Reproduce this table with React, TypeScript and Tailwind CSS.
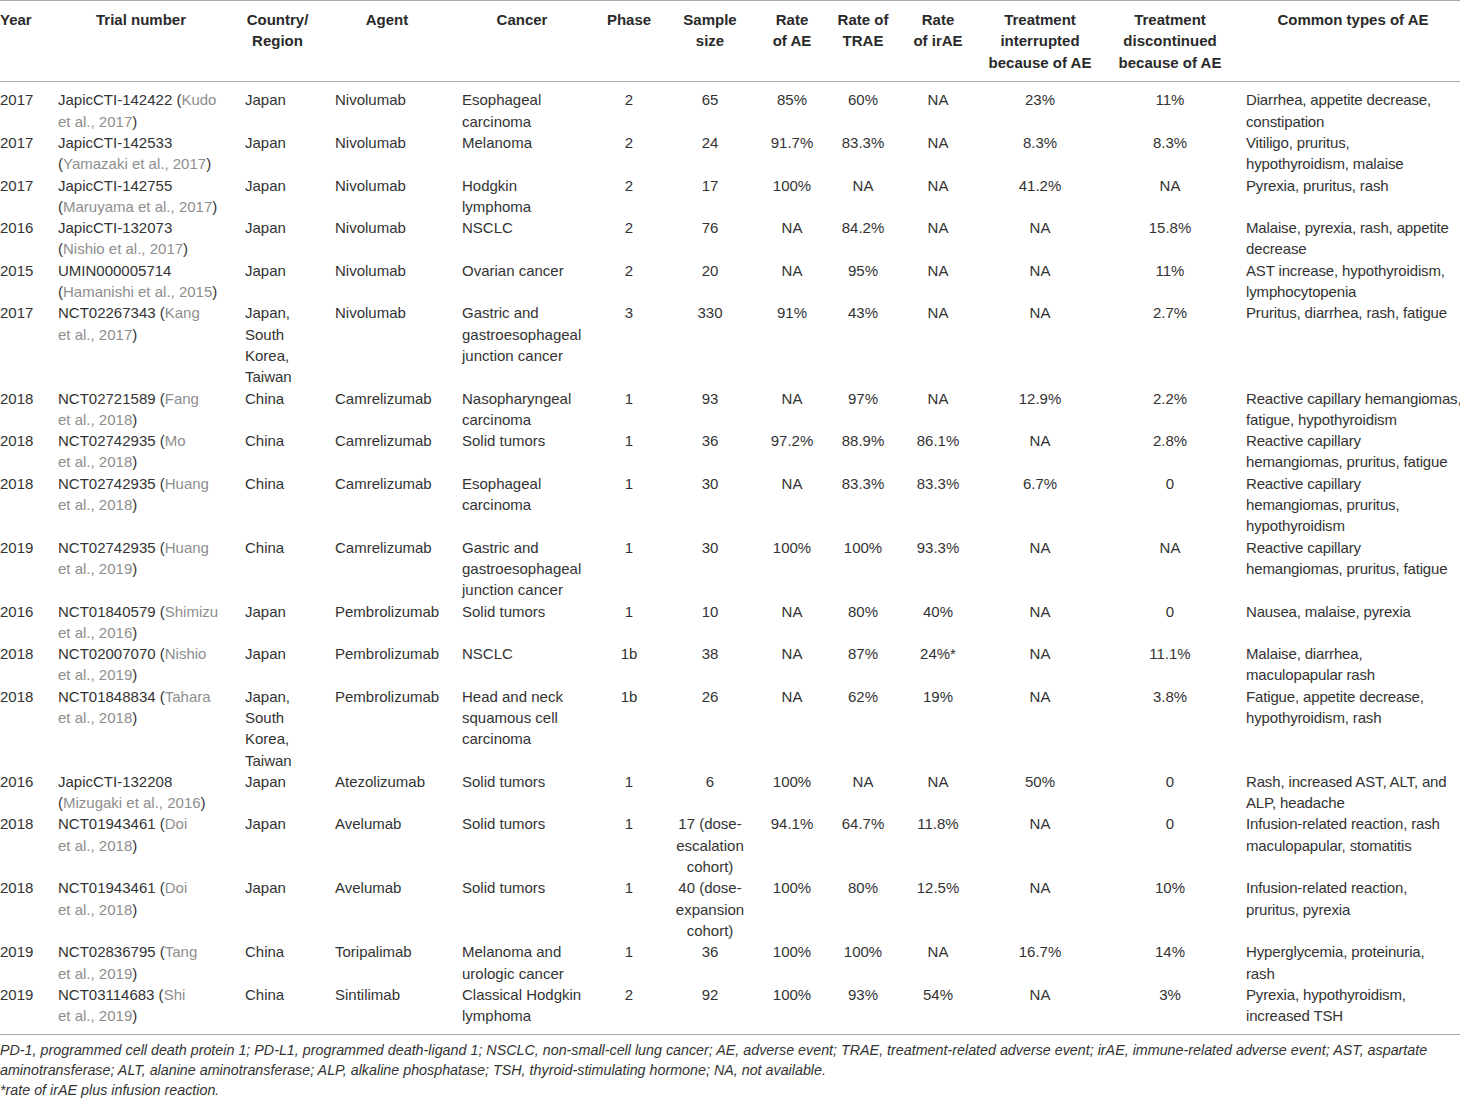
import React from "react";

type Row = {
  year: string;
  trial: string[];
  country: string[];
  agent: string;
  cancer: string[];
  phase: string;
  sample: string[];
  ae: string;
  trae: string;
  irae: string;
  inter: string;
  disc: string;
  common: string[];
};

const rows: Row[] = [
  { year: "2017", trial: ["JapicCTI-142422 ([Kudo", "et al., 2017])"], country: ["Japan"], agent: "Nivolumab", cancer: ["Esophageal", "carcinoma"], phase: "2", sample: ["65"], ae: "85%", trae: "60%", irae: "NA", inter: "23%", disc: "11%", common: ["Diarrhea, appetite decrease,", "constipation"] },
  { year: "2017", trial: ["JapicCTI-142533", "([Yamazaki et al., 2017])"], country: ["Japan"], agent: "Nivolumab", cancer: ["Melanoma"], phase: "2", sample: ["24"], ae: "91.7%", trae: "83.3%", irae: "NA", inter: "8.3%", disc: "8.3%", common: ["Vitiligo, pruritus,", "hypothyroidism, malaise"] },
  { year: "2017", trial: ["JapicCTI-142755", "([Maruyama et al., 2017])"], country: ["Japan"], agent: "Nivolumab", cancer: ["Hodgkin", "lymphoma"], phase: "2", sample: ["17"], ae: "100%", trae: "NA", irae: "NA", inter: "41.2%", disc: "NA", common: ["Pyrexia, pruritus, rash"] },
  { year: "2016", trial: ["JapicCTI-132073", "([Nishio et al., 2017])"], country: ["Japan"], agent: "Nivolumab", cancer: ["NSCLC"], phase: "2", sample: ["76"], ae: "NA", trae: "84.2%", irae: "NA", inter: "NA", disc: "15.8%", common: ["Malaise, pyrexia, rash, appetite", "decrease"] },
  { year: "2015", trial: ["UMIN000005714", "([Hamanishi et al., 2015])"], country: ["Japan"], agent: "Nivolumab", cancer: ["Ovarian cancer"], phase: "2", sample: ["20"], ae: "NA", trae: "95%", irae: "NA", inter: "NA", disc: "11%", common: ["AST increase, hypothyroidism,", "lymphocytopenia"] },
  { year: "2017", trial: ["NCT02267343 ([Kang", "et al., 2017])"], country: ["Japan,", "South", "Korea,", "Taiwan"], agent: "Nivolumab", cancer: ["Gastric and", "gastroesophageal", "junction cancer"], phase: "3", sample: ["330"], ae: "91%", trae: "43%", irae: "NA", inter: "NA", disc: "2.7%", common: ["Pruritus, diarrhea, rash, fatigue"] },
  { year: "2018", trial: ["NCT02721589 ([Fang", "et al., 2018])"], country: ["China"], agent: "Camrelizumab", cancer: ["Nasopharyngeal", "carcinoma"], phase: "1", sample: ["93"], ae: "NA", trae: "97%", irae: "NA", inter: "12.9%", disc: "2.2%", common: ["Reactive capillary hemangiomas,", "fatigue, hypothyroidism"] },
  { year: "2018", trial: ["NCT02742935 ([Mo", "et al., 2018])"], country: ["China"], agent: "Camrelizumab", cancer: ["Solid tumors"], phase: "1", sample: ["36"], ae: "97.2%", trae: "88.9%", irae: "86.1%", inter: "NA", disc: "2.8%", common: ["Reactive capillary", "hemangiomas, pruritus, fatigue"] },
  { year: "2018", trial: ["NCT02742935 ([Huang", "et al., 2018])"], country: ["China"], agent: "Camrelizumab", cancer: ["Esophageal", "carcinoma"], phase: "1", sample: ["30"], ae: "NA", trae: "83.3%", irae: "83.3%", inter: "6.7%", disc: "0", common: ["Reactive capillary", "hemangiomas, pruritus,", "hypothyroidism"] },
  { year: "2019", trial: ["NCT02742935 ([Huang", "et al., 2019])"], country: ["China"], agent: "Camrelizumab", cancer: ["Gastric and", "gastroesophageal", "junction cancer"], phase: "1", sample: ["30"], ae: "100%", trae: "100%", irae: "93.3%", inter: "NA", disc: "NA", common: ["Reactive capillary", "hemangiomas, pruritus, fatigue"] },
  { year: "2016", trial: ["NCT01840579 ([Shimizu", "et al., 2016])"], country: ["Japan"], agent: "Pembrolizumab", cancer: ["Solid tumors"], phase: "1", sample: ["10"], ae: "NA", trae: "80%", irae: "40%", inter: "NA", disc: "0", common: ["Nausea, malaise, pyrexia"] },
  { year: "2018", trial: ["NCT02007070 ([Nishio", "et al., 2019])"], country: ["Japan"], agent: "Pembrolizumab", cancer: ["NSCLC"], phase: "1b", sample: ["38"], ae: "NA", trae: "87%", irae: "24%*", inter: "NA", disc: "11.1%", common: ["Malaise, diarrhea,", "maculopapular rash"] },
  { year: "2018", trial: ["NCT01848834 ([Tahara", "et al., 2018])"], country: ["Japan,", "South", "Korea,", "Taiwan"], agent: "Pembrolizumab", cancer: ["Head and neck", "squamous cell", "carcinoma"], phase: "1b", sample: ["26"], ae: "NA", trae: "62%", irae: "19%", inter: "NA", disc: "3.8%", common: ["Fatigue, appetite decrease,", "hypothyroidism, rash"] },
  { year: "2016", trial: ["JapicCTI-132208", "([Mizugaki et al., 2016])"], country: ["Japan"], agent: "Atezolizumab", cancer: ["Solid tumors"], phase: "1", sample: ["6"], ae: "100%", trae: "NA", irae: "NA", inter: "50%", disc: "0", common: ["Rash, increased AST, ALT, and", "ALP, headache"] },
  { year: "2018", trial: ["NCT01943461 ([Doi", "et al., 2018])"], country: ["Japan"], agent: "Avelumab", cancer: ["Solid tumors"], phase: "1", sample: ["17 (dose-", "escalation", "cohort)"], ae: "94.1%", trae: "64.7%", irae: "11.8%", inter: "NA", disc: "0", common: ["Infusion-related reaction, rash", "maculopapular, stomatitis"] },
  { year: "2018", trial: ["NCT01943461 ([Doi", "et al., 2018])"], country: ["Japan"], agent: "Avelumab", cancer: ["Solid tumors"], phase: "1", sample: ["40 (dose-", "expansion", "cohort)"], ae: "100%", trae: "80%", irae: "12.5%", inter: "NA", disc: "10%", common: ["Infusion-related reaction,", "pruritus, pyrexia"] },
  { year: "2019", trial: ["NCT02836795 ([Tang", "et al., 2019])"], country: ["China"], agent: "Toripalimab", cancer: ["Melanoma and", "urologic cancer"], phase: "1", sample: ["36"], ae: "100%", trae: "100%", irae: "NA", inter: "16.7%", disc: "14%", common: ["Hyperglycemia, proteinuria,", "rash"] },
  { year: "2019", trial: ["NCT03114683 ([Shi", "et al., 2019])"], country: ["China"], agent: "Sintilimab", cancer: ["Classical Hodgkin", "lymphoma"], phase: "2", sample: ["92"], ae: "100%", trae: "93%", irae: "54%", inter: "NA", disc: "3%", common: ["Pyrexia, hypothyroidism,", "increased TSH"] },
];

function TrialLines({ lines }: { lines: string[] }) {
  let grey = false;
  return (
    <>
      {lines.map((line, li) => {
        const parts: { t: string; g: boolean }[] = [];
        let buf = "";
        for (const ch of line) {
          if (ch === "[" || ch === "]") {
            if (buf) parts.push({ t: buf, g: grey });
            buf = "";
            grey = ch === "[";
          } else buf += ch;
        }
        if (buf) parts.push({ t: buf, g: grey });
        return (
          <div key={li} className="whitespace-nowrap">
            {parts.map((p, pi) => (
              <span key={pi} className={p.g ? "text-[#8e8e8e]" : ""}>
                {p.t}
              </span>
            ))}
          </div>
        );
      })}
    </>
  );
}

function Lines({ lines }: { lines: string[] }) {
  return (
    <>
      {lines.map((l, i) => (
        <div key={i} className="whitespace-nowrap">
          {l}
        </div>
      ))}
    </>
  );
}

const gridCols =
  "grid grid-cols-[46px_190px_86px_129px_143px_70px_92px_72px_70px_80px_124px_136px_222px]";

export default function App() {
  return (
    <div
      className="w-[1460px] bg-white text-[15px] leading-[21.3px] text-[#333333]"
      style={{ fontFamily: '"Liberation Sans", Arial, sans-serif' }}
    >
      {/* Header */}
      <div className={`${gridCols} border-t border-b border-[#a8a8a8] pt-[8px] pb-[8px] font-bold text-[#2a2a2a]`}>
        <div className="text-left">Year</div>
        <div className="pl-[12px] pr-[12px] text-center">Trial number</div>
        <div className="pl-[9px] pr-[12px] text-center">
          <Lines lines={["Country/", "Region"]} />
        </div>
        <div className="pl-[13px] pr-[12px] text-center">Agent</div>
        <div className="pl-[11px] pr-[12px] text-center">Cancer</div>
        <div className="text-center">Phase</div>
        <div className="text-center">
          <Lines lines={["Sample", "size"]} />
        </div>
        <div className="text-center">
          <Lines lines={["Rate", "of AE"]} />
        </div>
        <div className="text-center">
          <Lines lines={["Rate of", "TRAE"]} />
        </div>
        <div className="text-center">
          <Lines lines={["Rate", "of irAE"]} />
        </div>
        <div className="text-center">
          <Lines lines={["Treatment", "interrupted", "because of AE"]} />
        </div>
        <div className="text-center">
          <Lines lines={["Treatment", "discontinued", "because of AE"]} />
        </div>
        <div className="pl-[8px] text-center">Common types of AE</div>
      </div>

      {/* Body */}
      <div className={`${gridCols} pt-[7.5px] pb-[7.5px] border-b border-[#a8a8a8]`}>
        {rows.map((r, i) => (
          <React.Fragment key={i}>
            <div className="whitespace-nowrap">{r.year}</div>
            <div className="pl-[12px]">
              <TrialLines lines={r.trial} />
            </div>
            <div className="pl-[9px]">
              <Lines lines={r.country} />
            </div>
            <div className="pl-[13px] whitespace-nowrap">{r.agent}</div>
            <div className="pl-[11px]">
              <Lines lines={r.cancer} />
            </div>
            <div className="text-center">{r.phase}</div>
            <div className="text-center">
              <Lines lines={r.sample} />
            </div>
            <div className="text-center">{r.ae}</div>
            <div className="text-center">{r.trae}</div>
            <div className="text-center">{r.irae}</div>
            <div className="text-center">{r.inter}</div>
            <div className="text-center">{r.disc}</div>
            <div className="pl-[8px] tracking-[-0.15px]">
              <Lines lines={r.common} />
            </div>
          </React.Fragment>
        ))}
      </div>

      {/* Footer */}
      <div className="pt-[5px] pb-[8px] text-[14.3px] italic leading-[20px] text-[#333333]">
        <div className="whitespace-nowrap">
          PD-1, programmed cell death protein 1; PD-L1, programmed death-ligand 1; NSCLC, non-small-cell lung cancer; AE, adverse event; TRAE, treatment-related adverse event; irAE, immune-related adverse event; AST, aspartate
        </div>
        <div className="whitespace-nowrap">
          aminotransferase; ALT, alanine aminotransferase; ALP, alkaline phosphatase; TSH, thyroid-stimulating hormone; NA, not available.
        </div>
        <div className="whitespace-nowrap">*rate of irAE plus infusion reaction.</div>
      </div>
    </div>
  );
}
